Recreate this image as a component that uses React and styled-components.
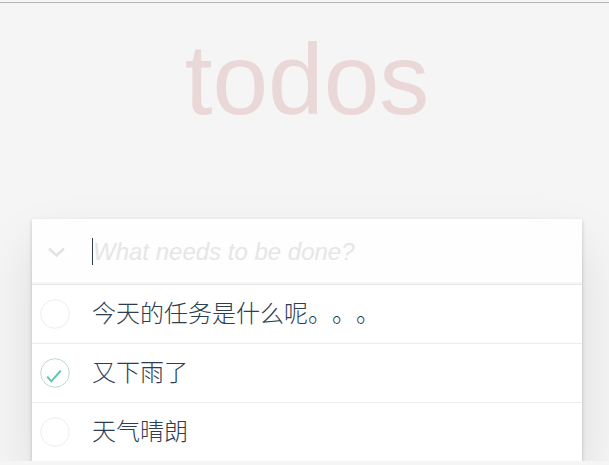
import styled, { createGlobalStyle } from "styled-components";

const todos = [
  { id: 1, title: "今天的任务是什么呢。。。", completed: false },
  { id: 2, title: "又下雨了", completed: true },
  { id: 3, title: "天气晴朗", completed: false },
];

const App = () => {
  return (
    <>
      <GlobalStyle />
      <TopRule />
      <TodoApp>
        <Title>todos</Title>
        <Card>
          <Header>
            <ToggleAll>
              <svg width="20" height="12" viewBox="0 0 20 12">
                <polyline
                  points="2,2.5 9.5,9.5 17,2.5"
                  fill="none"
                  stroke="#e3e3e3"
                  strokeWidth="2.6"
                />
              </svg>
            </ToggleAll>
            <NewTodo>
              <Caret />
              <Placeholder>What needs to be done?</Placeholder>
            </NewTodo>
          </Header>
          <TodoList>
            {todos.map((todo) => (
              <TodoItem key={todo.id}>
                <CheckCell>
                  <svg width="30" height="30" viewBox="0 0 30 30">
                    <circle
                      cx="15"
                      cy="15"
                      r="14.3"
                      fill="none"
                      stroke={todo.completed ? "#bddad5" : "#ededed"}
                      strokeWidth="1"
                    />
                    {todo.completed && (
                      <polyline
                        points="7.2,18.6 11.3,23.3 20.8,12.6"
                        fill="none"
                        stroke="#5dc2af"
                        strokeWidth="2"
                      />
                    )}
                  </svg>
                </CheckCell>
                <Label>{todo.title}</Label>
              </TodoItem>
            ))}
          </TodoList>
        </Card>
      </TodoApp>
    </>
  );
};

export default App;

// Styled Components

const GlobalStyle = createGlobalStyle`
  body {
    margin: 0;
    background: #f5f5f5;
    font-family: "Liberation Sans", Helvetica, Arial, "Noto Sans CJK SC", sans-serif;
    overflow: hidden;
  }
`;

const TopRule = styled.div`
  margin-top: 2px;
  height: 1px;
  background: #b3b3b3;
`;

const TodoApp = styled.section`
  width: 550px;
  margin-left: 32px;
`;

const Title = styled.h1`
  margin: 19px 0 0;
  font-size: 100px;
  line-height: 115px;
  font-weight: 100;
  text-align: center;
  color: rgba(175, 47, 47, 0.15);
`;

const Card = styled.div`
  margin-top: 82px;
  background: #fff;
  box-shadow: 0 2px 4px 0 rgba(0, 0, 0, 0.2), 0 25px 50px 0 rgba(0, 0, 0, 0.1);
`;

const Header = styled.header`
  display: flex;
  align-items: center;
  height: 65px;
  border-bottom: 1px solid #e6e6e6;
  background: rgba(0, 0, 0, 0.003);
  box-shadow: inset 0 -2px 1px rgba(0, 0, 0, 0.03);
`;

const ToggleAll = styled.div`
  width: 60px;
  padding-left: 15px;
  box-sizing: border-box;
  display: flex;
  align-items: center;
  padding-top: 1px;
`;

const NewTodo = styled.div`
  flex: 1;
  display: flex;
  align-items: center;
`;

const Caret = styled.span`
  width: 1px;
  height: 27px;
  background: #2c3e50;
`;

const Placeholder = styled.span`
  font-size: 24px;
  font-style: italic;
  color: #e6e6e6;
`;

const TodoList = styled.ul`
  margin: 0;
  padding: 0;
  list-style: none;
`;

const TodoItem = styled.li`
  display: flex;
  align-items: center;
  height: 58px;
  border-bottom: 1px solid #ededed;

  &:last-child {
    border-bottom: none;
  }
`;

const CheckCell = styled.div`
  width: 60px;
  padding-left: 8px;
  box-sizing: border-box;
  display: flex;
  align-items: center;
`;

const Label = styled.label`
  padding-bottom: 6px;
  font-size: 24px;
  font-weight: 300;
  color: #2c3e50;
  font-family: "Noto Sans CJK SC", "Noto Sans CJK JP", sans-serif;
  text-spacing-trim: space-all;
`;
